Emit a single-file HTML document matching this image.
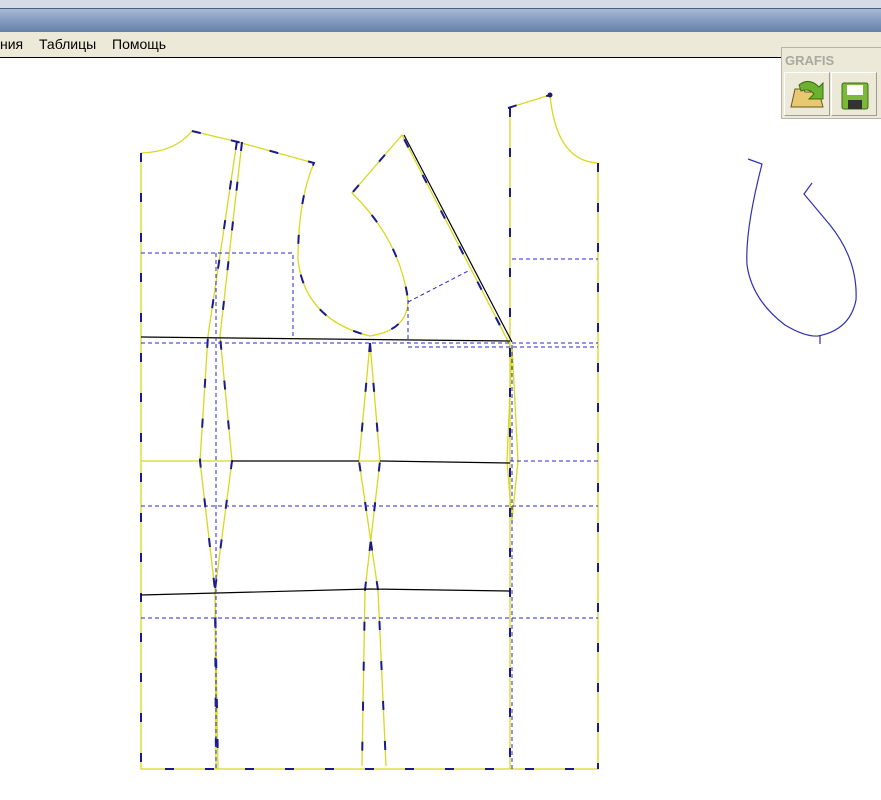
<!DOCTYPE html>
<html><head><meta charset="utf-8"><style>
html,body{margin:0;padding:0;width:881px;height:800px;overflow:hidden;background:#fff;font-family:"Liberation Sans",sans-serif}
.top{position:absolute;left:0;top:0;width:881px;height:8px;background:#d5dce8;border-bottom:1px solid #4a5f85}
.title{position:absolute;left:0;top:9px;width:881px;height:23px;background:linear-gradient(#a9bad4,#8aa1c4 40%,#6780aa)}
.menu{position:absolute;left:0;top:32px;width:881px;height:25px;background:#ece9d8;border-bottom:1px solid #000;font-size:14px;color:#000}
.menu span{position:absolute;top:4px}
.tb{position:absolute;left:781px;top:47px;width:110px;height:72px;background:#ece9d8;border:1px solid #b8b5a8;box-sizing:border-box}
.tb .lbl{position:absolute;left:3px;top:5px;font-size:13px;color:#aaa8a0;font-weight:bold}
.btn{position:absolute;top:24px;width:46px;height:44px;border:1px solid #fff;border-right-color:#a09d90;border-bottom-color:#a09d90;box-sizing:border-box;background:#ece9d8}
</style></head><body>
<div class="top"></div><div class="title"></div>
<div class="menu"><span style="left:0">ния</span><span style="left:39px">Таблицы</span><span style="left:112px">Помощь</span></div>
<svg width="881" height="800" style="position:absolute;left:0;top:0" fill="none">
<g stroke="#d8d820" stroke-width="1.3">
<path d="M141,153 V769 H598 V163"/>
<path d="M141,153 Q175,152 192,131 L238,142 L314,163 Q298,200 298,260 Q305,320 370,336 Q408,330 408,300 Q400,240 352,193 L402,135 L510,345"/>
<path d="M508,108 L550,95 Q556,160 597,163"/>
<path d="M510,108 V769"/>
<path d="M237,141 L208,336 L200,461 L215,590 L216,769 M242,142 L220,336 L232,461 L215,590 L218,769"/>
<path d="M370,343 L359,461 L378,590 L386,766 M370,343 L380,461 L365,590 L362,766"/>
<path d="M512,345 L507,461 L512,520 M512,345 L518,461 L512,520"/>
<path d="M141,461 H232 M359,461 H380"/>
</g>
<g stroke="#1a1a8a" stroke-width="2" stroke-dasharray="9 31">
<path d="M141,153 V769 H598 M598,163 V769"/>
<path d="M192,131 L238,142 L314,163 Q298,200 298,260 Q305,320 370,336 Q408,330 408,300 Q400,240 352,193 L402,135 L510,345"/>
<path d="M510,108 V769 M508,108 L550,95"/>
<path d="M237,141 L208,336 L200,461 L215,590 L216,769 M242,142 L220,336 L232,461 L215,590 L218,769"/>
<path d="M370,343 L359,461 L378,590 L386,766 M370,343 L380,461 L365,590 L362,766"/>
</g>
<g stroke="#000" stroke-width="1.2">
<path d="M141,337 L510,341"/>
<path d="M232,461 H359 M380,461 L510,463"/>
<path d="M141,595 L370,589 L510,591"/>
<path d="M404,135 L512,342"/>
</g>
<g stroke="#2828c8" stroke-width="1" stroke-dasharray="4 3">
<path d="M141,343 H598 M408,347 H598 M141,253 H293 V336 M512,259 H598 M408,300 V343 M408,302 L470,270"/>
<path d="M510,461 H598 M141,506 H598 M141,618 H598"/>
<path d="M216,253 V769 M512,345 V769"/>
</g>
<path d="M748,159 L762,164 Q745,230 747,265 Q752,300 785,325 Q805,337 818,336 Q850,330 856,300 Q858,260 830,225 L804,194 L812,183 M820,336 V344" stroke="#3030b0" stroke-width="1.2"/>
<circle cx="550" cy="95" r="2.5" fill="#202060"/>
</svg>
<div class="tb"><div class="lbl">GRAFIS</div>
<div class="btn" style="left:2px"><svg width="44" height="42"><path d="M6,34 L10,16 L18,16 L20,19 L34,19 L38,34 Z" fill="#e8c870" stroke="#6a5a20"/><path d="M14,12 Q24,4 34,14 L38,10 L38,26 L24,26 L29,21 Q24,15 16,18Z" fill="#6cb030" stroke="#3a7010"/></svg></div>
<div class="btn" style="left:49px"><svg width="44" height="42"><rect x="10" y="10" width="26" height="26" rx="2" fill="#7cb83a" stroke="#3e6a18"/><rect x="15" y="12" width="16" height="10" fill="#fff"/><rect x="16" y="27" width="14" height="9" fill="#333"/></svg></div>
</div>
</body></html>
